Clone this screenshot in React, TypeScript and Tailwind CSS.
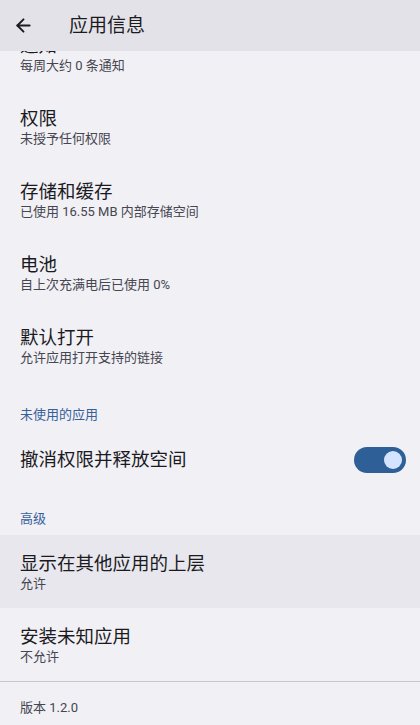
import { ArrowLeft } from 'lucide-react';

const FONT = { fontFamily: 'Roboto, "Noto Sans CJK SC", "Noto Sans", sans-serif' };

type Row = { title: string; summary: string; highlighted?: boolean };

const topRows: Row[] = [
  { title: '通知', summary: '每周大约 0 条通知' },
  { title: '权限', summary: '未授予任何权限' },
  { title: '存储和缓存', summary: '已使用 16.55 MB 内部存储空间' },
  { title: '电池', summary: '自上次充满电后已使用 0%' },
  { title: '默认打开', summary: '允许应用打开支持的链接' },
];

const advancedRows: Row[] = [
  { title: '显示在其他应用的上层', summary: '允许', highlighted: true },
  { title: '安装未知应用', summary: '不允许' },
];

function SettingRow({ row }: { row: Row }) {
  return (
    <div className={['h-[73px] px-5 pt-[19px]', row.highlighted ? 'bg-[#e8e7ed]' : ''].join(' ')}>
      <p className="text-[18.5px] leading-[21px] text-[#1b1b1f]">{row.title}</p>
      <p className="text-[13px] leading-[18px] text-[#45464f]">{row.summary}</p>
    </div>
  );
}

function SectionHeader({ label, className }: { label: string; className: string }) {
  return (
    <p className={['px-5 text-[13px] leading-[18px] text-[#36609a]', className].join(' ')}>{label}</p>
  );
}

export default function App() {
  return (
    <div className="flex h-[725px] w-[420px] flex-col overflow-hidden bg-[#f1f0f5]" style={FONT}>
      <header className="relative z-10 flex h-[51px] shrink-0 items-center bg-[#e3e2e8]">
        <ArrowLeft className="ml-[13px] h-[21px] w-[21px] text-[#1b1b1f]" strokeWidth={2.2} />
        <h1 className="ml-[35px] text-[19px] leading-[24px] text-[#1b1b1f]">应用信息</h1>
      </header>

      <div className="-mt-[34px] flex flex-col">
        {topRows.map((row) => (
          <SettingRow key={row.title} row={row} />
        ))}

        <SectionHeader label="未使用的应用" className="pt-[24px] pb-[7px]" />
        <div className="flex h-[58px] items-center justify-between pl-5 pr-[14px]">
          <span className="text-[18.5px] leading-[25px] text-[#1b1b1f]">撤消权限并释放空间</span>
          <span className="flex h-[26px] w-[52px] items-center justify-end rounded-full bg-[#2e6097] pr-[4px]">
            <span className="h-[18px] w-[18px] rounded-full bg-[#d4e3ff]" />
          </span>
        </div>

        <SectionHeader label="高级" className="pt-[21px] pb-[7px]" />
        {advancedRows.map((row) => (
          <SettingRow key={row.title} row={row} />
        ))}

        <div className="h-px bg-[#c6c6cb]" />
        <p className="px-5 pt-[17px] text-[13px] leading-[18px] text-[#45464f]">版本 1.2.0</p>
      </div>
    </div>
  );
}
